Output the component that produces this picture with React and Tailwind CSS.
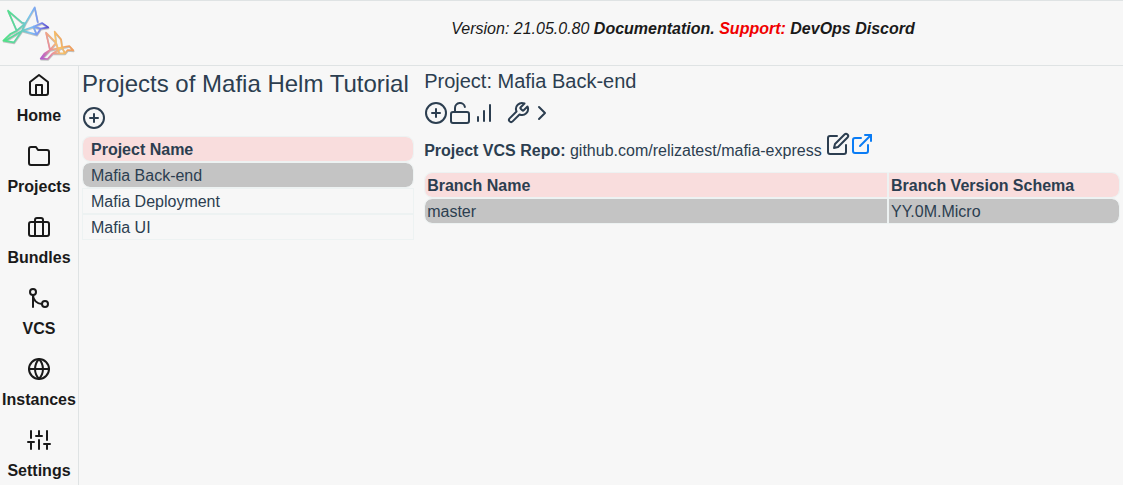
import React, { useState } from "react";
import {
  FiBarChart,
  FiBriefcase,
  FiChevronRight,
  FiEdit,
  FiExternalLink,
  FiFolder,
  FiGitMerge,
  FiGlobe,
  FiHome,
  FiPlusCircle,
  FiSliders,
  FiTool,
  FiUnlock,
} from "react-icons/fi";

const navItems = [
  { name: "Home", icon: FiHome },
  { name: "Projects", icon: FiFolder },
  { name: "Bundles", icon: FiBriefcase },
  { name: "VCS", icon: FiGitMerge },
  { name: "Instances", icon: FiGlobe },
  { name: "Settings", icon: FiSliders },
];

const projects = ["Mafia Back-end", "Mafia Deployment", "Mafia UI"];

const branches = [{ name: "master", schema: "YY.0M.Micro" }];

const coolBird =
  "M24 32L66 68M24 32L50 92M66 92L76 70L104 22L113 66M50 92L32 101L10 122L42 127L66 92L100 80L126 69L145 82L122 86L110 104L66 92M50 92L76 70L66 68M18 121L66 92M110 104L100 80M122 86L100 80";
const warmBird =
  "M138 98L168 128M138 98L150 150M164 95L183 118L186 142M164 95L168 128L150 150M150 150L134 160L122 176L143 177L158 160L195 160L203 150L220 151L208 138L186 142L158 160M150 150L186 142M128 173L150 150M186 142L195 160M168 128L178 160";

function Logo() {
  return (
    <svg
      viewBox="0 3 240 192"
      className="w-20 h-16"
      fill="none"
      strokeLinejoin="round"
      strokeLinecap="round"
    >
      <defs>
        <linearGradient
          id="birdCool"
          gradientUnits="userSpaceOnUse"
          x1="10"
          y1="80"
          x2="145"
          y2="80"
        >
          <stop offset="0" stopColor="#4fe384" />
          <stop offset="0.35" stopColor="#5fd3a8" />
          <stop offset="0.6" stopColor="#7cc0f2" />
          <stop offset="0.8" stopColor="#7d8ff0" />
          <stop offset="1" stopColor="#5a4ccc" />
        </linearGradient>
        <linearGradient
          id="birdWarm"
          gradientUnits="userSpaceOnUse"
          x1="122"
          y1="165"
          x2="195"
          y2="130"
        >
          <stop offset="0" stopColor="#b45fcb" />
          <stop offset="0.4" stopColor="#ea8c9c" />
          <stop offset="0.75" stopColor="#f7c56b" />
          <stop offset="1" stopColor="#f0a060" />
        </linearGradient>
      </defs>
      <g stroke="#55605f" strokeOpacity="0.35" strokeWidth="5">
        <path d={coolBird} transform="translate(1 3)" />
        <path d={warmBird} transform="translate(1 3)" />
      </g>
      <path d={coolBird} stroke="url(#birdCool)" strokeWidth="5" />
      <path d={warmBird} stroke="url(#birdWarm)" strokeWidth="5" />
    </svg>
  );
}

function IconButton({ label, children }) {
  return (
    <button aria-label={label} className="cursor-pointer align-baseline">
      {children}
    </button>
  );
}

function App() {
  const [selected, setSelected] = useState("Mafia Back-end");

  return (
    <div className="min-h-screen flex flex-col bg-[#f7f7f7] text-base text-[#2c3e50] font-['Liberation_Sans',Arial,sans-serif]">
      <header className="flex items-center border-y border-[#dfe3e4] text-[#1a1a1a]">
        <a href="#" aria-label="Reliza Hub" className="w-[243px] shrink-0">
          <Logo />
        </a>
        <p className="flex-1 text-center italic pb-2">
          Version: 21.05.0.80{" "}
          <a href="#" className="font-bold">
            Documentation.
          </a>{" "}
          <span className="font-bold text-[#f00000]">Support:</span>{" "}
          <a href="#" className="font-bold">
            DevOps Discord
          </a>
        </p>
      </header>

      <div className="flex flex-1">
        <nav className="w-[79px] shrink-0 border-r border-[#dfe3e4] pt-[7px] flex flex-col gap-4 text-[#1a1a1a]">
          {navItems.map(({ name, icon: Icon }) => (
            <a
              key={name}
              href="#"
              className="flex flex-col items-center gap-[7px] font-bold"
            >
              <Icon size={24} />
              <span>{name}</span>
            </a>
          ))}
        </nav>

        <main className="flex flex-1 gap-2.5 px-[3px]">
          {/* list of projects */}
          <section className="w-[32%]">
            <h1 className="text-2xl leading-9 whitespace-nowrap">
              Projects of Mafia Helm Tutorial
            </h1>
            <div className="flex mt-1 mb-1.5">
              <IconButton label="Add project">
                <FiPlusCircle size={24} />
              </IconButton>
            </div>
            <table className="w-full border-separate border-spacing-0 text-left leading-[22px]">
              <thead>
                <tr>
                  <th className="border border-[#edf2f2] rounded-lg bg-clip-padding bg-[#f9dddd] px-2 pt-0.5 font-bold">
                    Project Name
                  </th>
                </tr>
              </thead>
              <tbody>
                {projects.map((project) => (
                  <tr key={project} onClick={() => setSelected(project)}>
                    <td
                      className={`border border-[#edf2f2] bg-clip-padding px-2 pt-0.5 cursor-pointer ${
                        project === selected ? "bg-[#c4c4c4] rounded-lg" : ""
                      }`}
                    >
                      {project}
                    </td>
                  </tr>
                ))}
              </tbody>
            </table>
          </section>

          {/* selected project */}
          <section className="flex-1">
            <h2 className="text-xl leading-[30px]">Project: {selected}</h2>
            <div className="flex mt-[5px]">
              <IconButton label="Add branch">
                <FiPlusCircle size={24} />
              </IconButton>
              <IconButton label="Unlock">
                <FiUnlock size={24} />
              </IconButton>
              <IconButton label="Statistics">
                <FiBarChart size={24} />
              </IconButton>
              <div className="flex ml-2.5">
                <IconButton label="Project settings">
                  <FiTool size={24} />
                </IconButton>
                <IconButton label="Expand">
                  <FiChevronRight size={24} />
                </IconButton>
              </div>
            </div>
            <div className="mt-[7px] mb-[9px]">
              <span className="font-bold">Project VCS Repo:</span>{" "}
              github.com/relizatest/mafia-express{" "}
              <IconButton label="Edit repository">
                <FiEdit size={24} />
              </IconButton>
              <a
                href="#"
                aria-label="Open repository"
                className="inline-block align-baseline text-[#0a7cf5]"
              >
                <FiExternalLink size={24} />
              </a>
            </div>
            <table className="w-full table-fixed border-separate border-spacing-0 text-left leading-[22px]">
              <thead>
                <tr>
                  <th className="w-2/3 border border-[#edf2f2] rounded-l-lg bg-clip-padding bg-[#f9dddd] px-0.5 pt-0.5 font-bold">
                    Branch Name
                  </th>
                  <th className="border border-[#edf2f2] rounded-r-lg bg-clip-padding bg-[#f9dddd] px-0.5 pt-0.5 font-bold">
                    Branch Version Schema
                  </th>
                </tr>
              </thead>
              <tbody>
                {branches.map((branch) => (
                  <tr key={branch.name}>
                    <td className="border border-[#edf2f2] rounded-l-lg bg-clip-padding bg-[#c4c4c4] px-0.5 pt-0.5">
                      {branch.name}
                    </td>
                    <td className="border border-[#edf2f2] rounded-r-lg bg-clip-padding bg-[#c4c4c4] px-0.5 pt-0.5">
                      {branch.schema}
                    </td>
                  </tr>
                ))}
              </tbody>
            </table>
          </section>
        </main>
      </div>
    </div>
  );
}

export default App;
